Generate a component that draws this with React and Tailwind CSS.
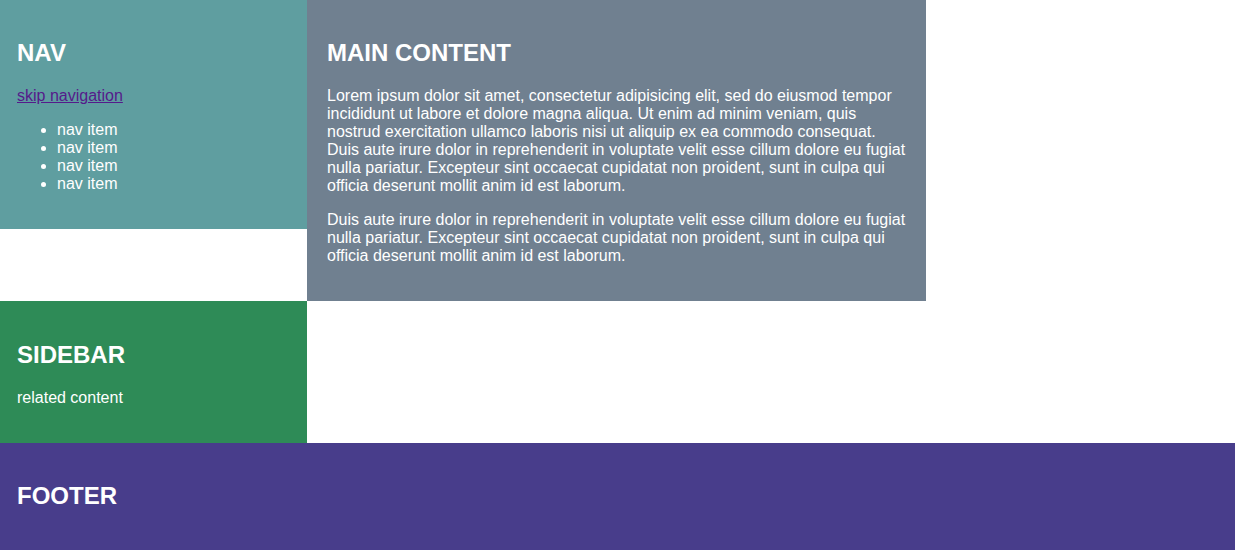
export default function App() {
  return (
    <div className="bg-white font-['Liberation_Sans',Arial,sans-serif] text-base leading-[18px] text-white">
      <div className="grid grid-cols-[307fr_619fr_309fr] items-start">
        <nav className="bg-[#5f9ea0] px-[17px] pt-[39px] pb-9">
          <h2 className="mb-[21px] text-2xl leading-[27px] font-bold">NAV</h2>
          <a href="#main" className="text-[#551a8b] underline">skip navigation</a>
          <ul className="mt-4 list-disc pl-10">
            <li>nav item</li>
            <li>nav item</li>
            <li>nav item</li>
            <li>nav item</li>
          </ul>
        </nav>
        <main id="main" className="bg-[#708090] pt-[39px] pr-4 pb-9 pl-5">
          <h2 className="mb-[21px] text-2xl leading-[27px] font-bold">MAIN CONTENT</h2>
          <p className="mb-4">
            Lorem ipsum dolor sit amet, consectetur adipisicing elit, sed do eiusmod tempor incididunt ut labore et dolore magna aliqua. Ut enim ad minim veniam, quis nostrud exercitation ullamco laboris nisi ut aliquip ex ea commodo consequat. Duis aute irure dolor in reprehenderit in voluptate velit esse cillum dolore eu fugiat nulla pariatur. Excepteur sint occaecat cupidatat non proident, sunt in culpa qui officia deserunt mollit anim id est laborum.
          </p>
          <p>
            Duis aute irure dolor in reprehenderit in voluptate velit esse cillum dolore eu fugiat nulla pariatur. Excepteur sint occaecat cupidatat non proident, sunt in culpa qui officia deserunt mollit anim id est laborum.
          </p>
        </main>
        <aside className="col-start-1 bg-[#2e8b57] px-[17px] pt-10 pb-9">
          <h2 className="mb-[21px] text-2xl leading-[27px] font-bold">SIDEBAR</h2>
          <p>related content</p>
        </aside>
      </div>
      <footer className="bg-[#483d8b] px-[17px] pt-[39px] pb-[41px]">
        <h2 className="text-2xl leading-[27px] font-bold">FOOTER</h2>
      </footer>
    </div>
  );
}
